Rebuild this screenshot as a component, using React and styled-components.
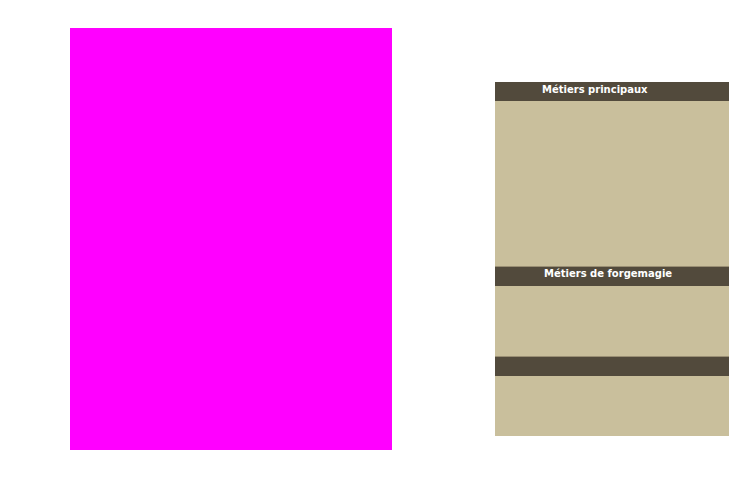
import React from "react";
import styled, { createGlobalStyle } from "styled-components";

const Global = createGlobalStyle`
    html, body { margin: 0; padding: 0; background: #fff; }
    body { width: 742px; height: 480px; overflow: hidden; font-family: "DejaVu Sans", Verdana, sans-serif; }
`;

const Page = styled.div`
    display: flex; align-items: flex-start; padding: 28px 0 0 70px;
`;

const Placeholder = styled.div`
    width: 322px; height: 422px; background: #ff00ff;
`;

const Panel = styled.div`
    width: 234px; margin: 54px 0 0 103px; background: #c9bf9c;
    display: flex; flex-direction: column;
`;

const Header = styled.div`
    height: ${p => p.$line ? 20 : 19}px; box-sizing: border-box; background: #524a3c;
    border-top: ${p => p.$line ? "1px solid #9a8f74" : "none"};
    color: #fff; font-size: 10px; font-weight: bold;
    line-height: ${p => p.$line ? 13 : 16}px;
    padding-left: ${p => p.$indent}px;
`;

const Body = styled.div`
    height: ${p => p.$h}px;
`;

const App = () => {
    return (
        <Page>
            <Global />
            <Placeholder />
            <Panel>
                <Header $indent={47}>Métiers principaux</Header>
                <Body $h={165} />
                <Header $indent={49} $line>Métiers de forgemagie</Header>
                <Body $h={70} />
                <Header $line />
                <Body $h={60} />
            </Panel>
        </Page>
    );
};

export default App;
